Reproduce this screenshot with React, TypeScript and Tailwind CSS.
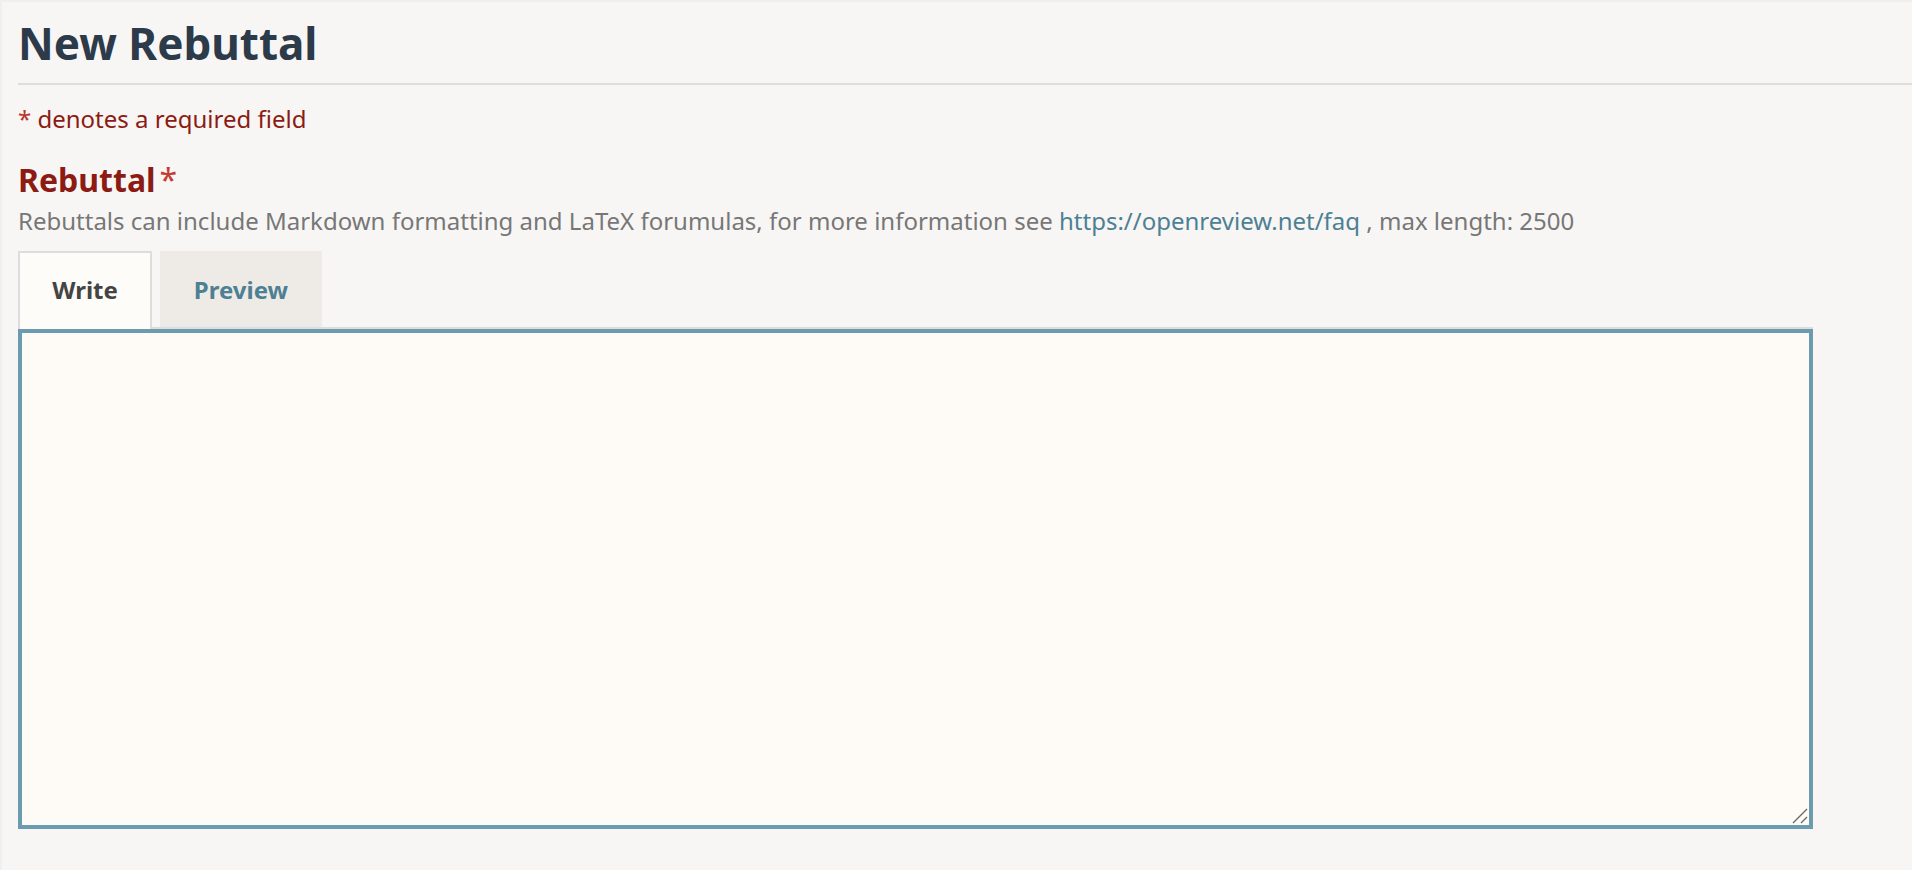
import React from 'react';

const font = { fontFamily: '"Noto Sans", "Open Sans", sans-serif' };

const App: React.FC = () => {
  return (
    <div
      style={font}
      className="min-h-[870px] bg-[#f7f6f4] border-t-2 border-l-2 border-[#efefef]"
    >
      <div className="pl-[16px] pt-[16px]">
        <h1 className="text-[44px] leading-[50px] font-bold text-[#2c3a4a] pb-[15px] border-b-2 border-[#dddddd]">
          New Rebuttal
        </h1>

        <p className="mt-[16px] text-[24px] leading-[36px] text-[#8c1b13]">
          <span className="text-[#b8352c]">*</span> denotes a required field
        </p>

        {/* Field */}
        <div className="mt-[23px]">
          <label className="block text-[32px] leading-[40px] font-bold text-[#8c1b13]">
            Rebuttal<span className="text-[#c43b32] font-normal ml-[4px]">*</span>
          </label>
          <p className="mt-[3px] text-[24px] leading-[36px] text-[#777777]">
            Rebuttals can include Markdown formatting and LaTeX forumulas, for more information see{' '}
            <a href="#" className="text-[#4d8093]">
              https://openreview.net/faq
            </a>{' '}
            , max length: 2500
          </p>

          {/* Tabs */}
          <div className="mt-[12px] w-[1795px] flex items-start border-b-2 border-[#dddddd]">
            <button className="h-[78px] w-[134px] -mb-[2px] pt-[19px] border-2 border-b-0 border-[#dddddd] bg-[#fefcf9] text-[24px] leading-[36px] font-bold text-[#444444] flex justify-center items-start">
              Write
            </button>
            <button className="h-[76px] w-[162px] ml-[8px] pt-[21px] bg-[#eeebe6] text-[24px] leading-[36px] font-bold text-[#4d8093] flex justify-center items-start">
              Preview
            </button>
          </div>

          <div className="relative w-[1795px]">
            <textarea className="block w-[1795px] h-[500px] border-4 border-[#6c9aae] bg-[#fefbf7] outline-none resize-none" />
            {/* resize grip */}
            <svg
              className="absolute right-[5px] bottom-[5px] pointer-events-none"
              width="16"
              height="16"
              viewBox="0 0 16 16"
            >
              <path d="M1 15 L15 1 M9 15 L15 9" stroke="#666666" strokeWidth="1.3" />
            </svg>
          </div>
        </div>
      </div>
    </div>
  );
};

export default App;
